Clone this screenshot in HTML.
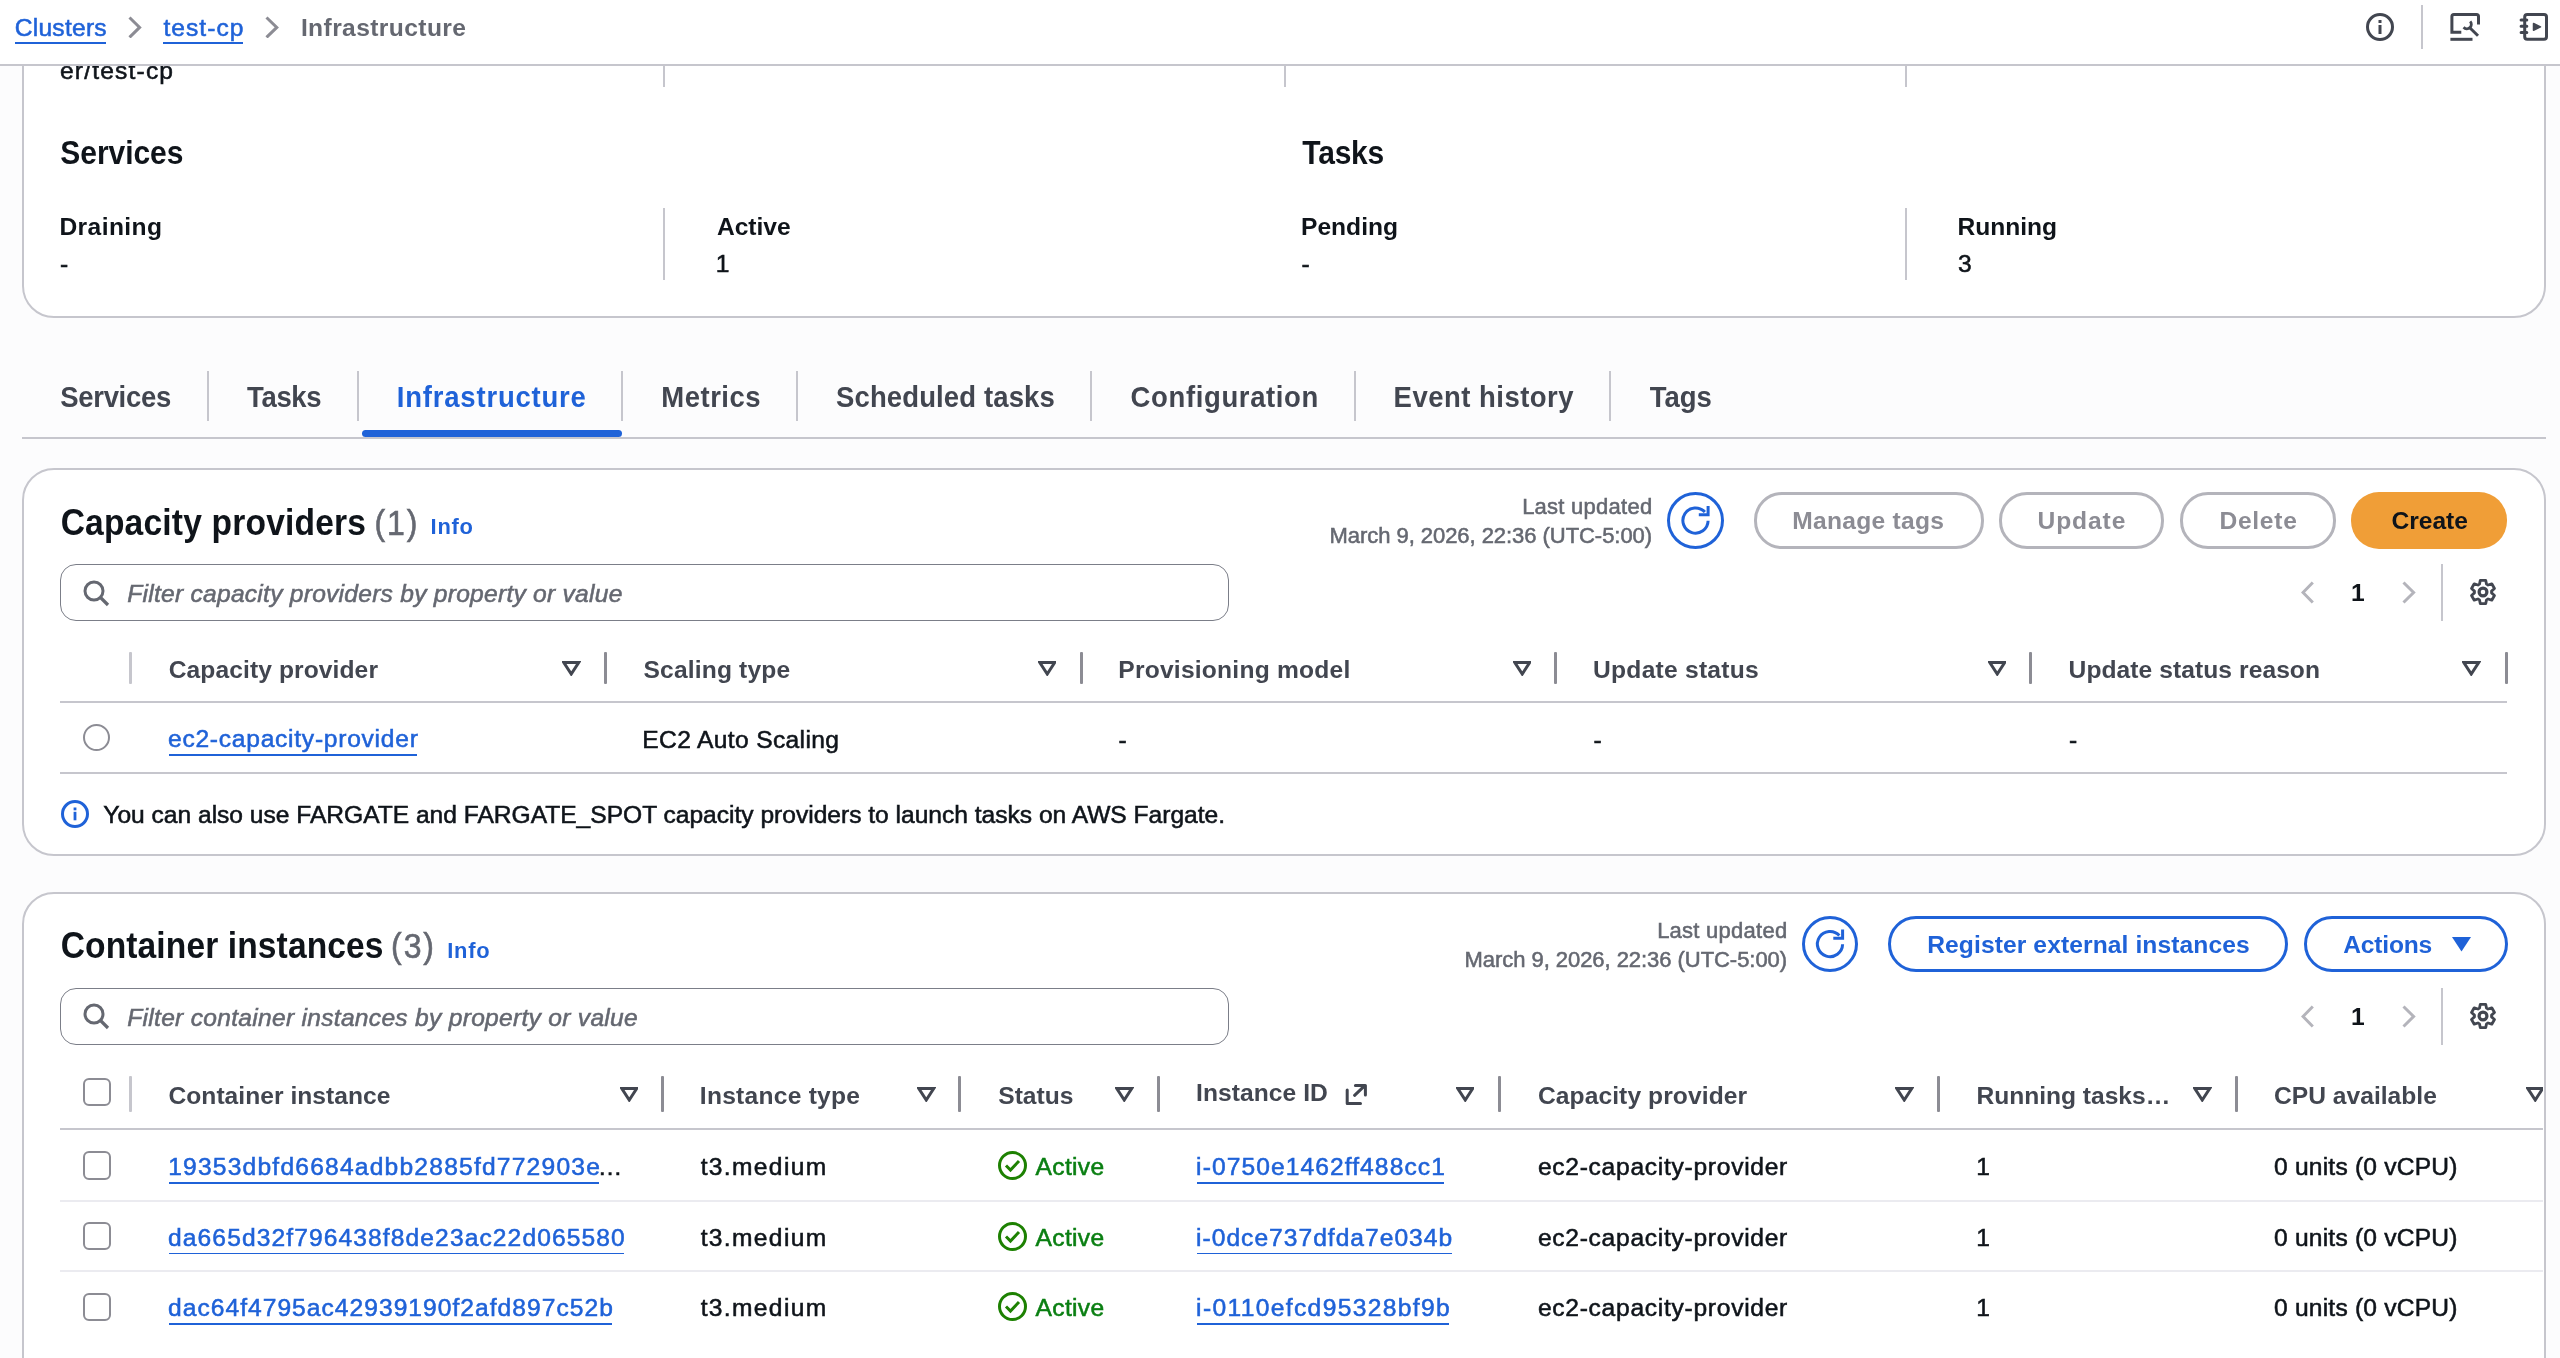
<!DOCTYPE html>
<html><head><meta charset="utf-8"><style>
html,body{margin:0;padding:0}
body{width:2560px;height:1358px;overflow:hidden;position:relative;background:#fcfcfd;font-family:"Liberation Sans",sans-serif}
.t{position:absolute;white-space:nowrap;line-height:1}
.r{position:absolute}
</style></head><body><div style="position:absolute;left:0;top:0;width:2560px;height:1358px;overflow:hidden;will-change:transform">
<div class="r" style="left:22.00px;top:-100.00px;width:2524.00px;height:418.00px;border:2px solid #c6c6cd;border-radius:32px;background:#ffffff;box-sizing:border-box;"></div>
<div class="r" style="left:22.00px;top:468.00px;width:2524.00px;height:388.00px;border:2px solid #c6c6cd;border-radius:32px;background:#ffffff;box-sizing:border-box;"></div>
<div class="r" style="left:22.00px;top:892.00px;width:2524.00px;height:518.00px;border:2px solid #c6c6cd;border-radius:32px;background:#ffffff;box-sizing:border-box;"></div>
<div class="t" style="left:60.02px;top:58.68px;font-size:24.6px;font-weight:normal;font-style:normal;color:#0f141a;letter-spacing:1.168px;-webkit-text-stroke:0.55px #0f141a;">er/test-cp</div>
<div class="r" style="left:663.00px;top:40.00px;width:2.00px;height:47.00px;background:#c6c6cd;"></div>
<div class="r" style="left:1284.00px;top:40.00px;width:2.00px;height:47.00px;background:#c6c6cd;"></div>
<div class="r" style="left:1905.00px;top:40.00px;width:2.00px;height:47.00px;background:#c6c6cd;"></div>
<div class="t" style="left:60.30px;top:139.41px;font-size:30px;font-weight:bold;font-style:normal;color:#0f141a;letter-spacing:-0.050px;transform-origin:0 25.39px;transform:scaleY(1.1);">Services</div>
<div class="t" style="left:1302.30px;top:139.41px;font-size:30px;font-weight:bold;font-style:normal;color:#0f141a;letter-spacing:-0.225px;transform-origin:0 25.39px;transform:scaleY(1.1);">Tasks</div>
<div class="t" style="left:59.40px;top:214.88px;font-size:24.6px;font-weight:bold;font-style:normal;color:#0f141a;letter-spacing:0.421px;">Draining</div>
<div class="t" style="left:59.89px;top:252.38px;font-size:24.6px;font-weight:normal;font-style:normal;color:#0f141a;letter-spacing:0.000px;-webkit-text-stroke:0.55px #0f141a;">-</div>
<div class="r" style="left:663.00px;top:208.00px;width:2.00px;height:72.00px;background:#c6c6cd;"></div>
<div class="t" style="left:716.88px;top:214.88px;font-size:24.6px;font-weight:bold;font-style:normal;color:#0f141a;letter-spacing:0.000px;">Active</div>
<div class="t" style="left:715.65px;top:252.38px;font-size:24.6px;font-weight:normal;font-style:normal;color:#0f141a;letter-spacing:0.000px;-webkit-text-stroke:0.55px #0f141a;">1</div>
<div class="t" style="left:1301.00px;top:214.88px;font-size:24.6px;font-weight:bold;font-style:normal;color:#0f141a;letter-spacing:0.000px;">Pending</div>
<div class="t" style="left:1301.49px;top:252.38px;font-size:24.6px;font-weight:normal;font-style:normal;color:#0f141a;letter-spacing:0.000px;-webkit-text-stroke:0.55px #0f141a;">-</div>
<div class="r" style="left:1905.00px;top:208.00px;width:2.00px;height:72.00px;background:#c6c6cd;"></div>
<div class="t" style="left:1957.40px;top:214.88px;font-size:24.6px;font-weight:bold;font-style:normal;color:#0f141a;letter-spacing:0.000px;">Running</div>
<div class="t" style="left:1958.02px;top:252.38px;font-size:24.6px;font-weight:normal;font-style:normal;color:#0f141a;letter-spacing:0.000px;-webkit-text-stroke:0.55px #0f141a;">3</div>
<div class="r" style="left:22.00px;top:437.00px;width:2524.00px;height:2.00px;background:#c6c6cd;"></div>
<div class="t" style="left:60.27px;top:384.42px;font-size:27.5px;font-weight:bold;font-style:normal;color:#424650;letter-spacing:-0.320px;transform-origin:0 23.28px;transform:scaleY(1.07);">Services</div>
<div class="t" style="left:247.12px;top:384.42px;font-size:27.5px;font-weight:bold;font-style:normal;color:#424650;letter-spacing:-0.381px;transform-origin:0 23.28px;transform:scaleY(1.07);">Tasks</div>
<div class="t" style="left:396.81px;top:384.42px;font-size:27.5px;font-weight:bold;font-style:normal;color:#1f62d8;letter-spacing:0.792px;transform-origin:0 23.28px;transform:scaleY(1.07);">Infrastructure</div>
<div class="t" style="left:661.21px;top:384.42px;font-size:27.5px;font-weight:bold;font-style:normal;color:#424650;letter-spacing:0.523px;transform-origin:0 23.28px;transform:scaleY(1.07);">Metrics</div>
<div class="t" style="left:836.07px;top:384.42px;font-size:27.5px;font-weight:bold;font-style:normal;color:#424650;letter-spacing:0.118px;transform-origin:0 23.28px;transform:scaleY(1.07);">Scheduled tasks</div>
<div class="t" style="left:1130.60px;top:384.42px;font-size:27.5px;font-weight:bold;font-style:normal;color:#424650;letter-spacing:0.624px;transform-origin:0 23.28px;transform:scaleY(1.07);">Configuration</div>
<div class="t" style="left:1393.61px;top:384.42px;font-size:27.5px;font-weight:bold;font-style:normal;color:#424650;letter-spacing:0.476px;transform-origin:0 23.28px;transform:scaleY(1.07);">Event history</div>
<div class="t" style="left:1649.72px;top:384.42px;font-size:27.5px;font-weight:bold;font-style:normal;color:#424650;letter-spacing:-0.058px;transform-origin:0 23.28px;transform:scaleY(1.07);">Tags</div>
<div class="r" style="left:207.00px;top:371.00px;width:2.00px;height:49.50px;background:#c6c6cd;"></div>
<div class="r" style="left:357.30px;top:371.00px;width:2.00px;height:49.50px;background:#c6c6cd;"></div>
<div class="r" style="left:621.40px;top:371.00px;width:2.00px;height:49.50px;background:#c6c6cd;"></div>
<div class="r" style="left:796.00px;top:371.00px;width:2.00px;height:49.50px;background:#c6c6cd;"></div>
<div class="r" style="left:1089.70px;top:371.00px;width:2.00px;height:49.50px;background:#c6c6cd;"></div>
<div class="r" style="left:1354.00px;top:371.00px;width:2.00px;height:49.50px;background:#c6c6cd;"></div>
<div class="r" style="left:1609.30px;top:371.00px;width:2.00px;height:49.50px;background:#c6c6cd;"></div>
<div class="r" style="left:361.80px;top:430.30px;width:259.90px;height:6.60px;background:#1f62d8;border-radius:4px"></div>
<div class="r" style="left:0.00px;top:0.00px;width:2560.00px;height:64.00px;background:#ffffff;z-index:5"></div>
<div class="r" style="left:0.00px;top:64.00px;width:2560.00px;height:2.00px;background:#c6c6cd;z-index:5"></div>
<div class="t" style="left:14.67px;top:15.98px;font-size:24.6px;font-weight:normal;font-style:normal;color:#1f62d8;letter-spacing:0.258px;z-index:6;-webkit-text-stroke:0.55px #1f62d8;">Clusters</div>
<div class="r" style="left:15.00px;top:42.30px;width:91.00px;height:1.70px;background:#1f62d8;z-index:6"></div>
<div class="t" style="left:163.38px;top:15.98px;font-size:24.6px;font-weight:normal;font-style:normal;color:#1f62d8;letter-spacing:1.050px;z-index:6;-webkit-text-stroke:0.55px #1f62d8;">test-cp</div>
<div class="r" style="left:163.00px;top:42.30px;width:80.00px;height:1.70px;background:#1f62d8;z-index:6"></div>
<div class="t" style="left:300.90px;top:15.58px;font-size:24.6px;font-weight:bold;font-style:normal;color:#656871;letter-spacing:0.397px;z-index:6;">Infrastructure</div>
<svg class="r" style="left:128.4px;top:15.5px;z-index:6" width="13.6" height="22.9"><path d="M1.5 1.5 L11.6 11.4 L1.5 21.4" fill="none" stroke="#8c8c94" stroke-width="3" stroke-linecap="butt" stroke-linejoin="miter"/></svg>
<svg class="r" style="left:265px;top:15.5px;z-index:6" width="13.8" height="22.9"><path d="M1.5 1.5 L11.8 11.4 L1.5 21.4" fill="none" stroke="#8c8c94" stroke-width="3" stroke-linecap="butt" stroke-linejoin="miter"/></svg>
<svg class="r" style="left:2366px;top:13px;z-index:6" width="28" height="28" viewBox="0 0 28 28"><circle cx="14" cy="14" r="12.5" fill="none" stroke="#424650" stroke-width="3"/><rect x="12.5" y="7" width="3" height="3" fill="#424650"/><rect x="12.5" y="12" width="3" height="9" fill="#424650"/></svg>
<div class="r" style="left:2421.00px;top:5.00px;width:2.00px;height:44.00px;background:#c6c6cd;z-index:6"></div>
<svg class="r" style="left:2450px;top:12px;z-index:6" width="32" height="32" viewBox="0 0 32 32"><path d="M11.3 20.3 H1.9 V4.5 Q1.9 2.5 3.9 2.5 H26.5 Q28.5 2.5 28.5 4.5 V12.6" fill="none" stroke="#424650" stroke-width="3"/><path d="M0.4 27.3 H22.5" stroke="#424650" stroke-width="3"/><path d="M13.6 15.3 A4.4 4.4 0 1 0 20.2 9.4" fill="none" stroke="#424650" stroke-width="2.8"/><path d="M19.8 15.8 L28 23.8" stroke="#424650" stroke-width="3"/></svg>
<svg class="r" style="left:2518px;top:12px;z-index:6" width="32" height="32" viewBox="0 0 32 32"><rect x="6.7" y="2.4" width="21.8" height="24.9" rx="2.5" fill="none" stroke="#424650" stroke-width="3"/><path d="M3.1 8 H8.8 M3.1 14.3 H8.8 M3.1 20.5 H8.8" stroke="#424650" stroke-width="3" stroke-linecap="round"/><path d="M15.5 11.5 L15.5 18.3 L22.5 14.9 Z" fill="#424650" stroke="#424650" stroke-width="1.5" stroke-linejoin="round"/></svg>
<div class="t" style="left:60.66px;top:506.56px;font-size:33.6px;font-weight:bold;font-style:normal;color:#0f141a;letter-spacing:0.176px;transform-origin:0 28.44px;transform:scaleY(1.1);">Capacity providers</div>
<div class="t" style="left:374.48px;top:507.91px;font-size:32px;font-weight:normal;font-style:normal;color:#656871;letter-spacing:1.900px;transform-origin:0 27.09px;transform:scaleY(1.1);-webkit-text-stroke:0.55px #656871;">(1)</div>
<div class="t" style="left:430.58px;top:516.06px;font-size:21.9px;font-weight:bold;font-style:normal;color:#1f62d8;letter-spacing:0.741px;">Info</div>
<div class="t" style="left:1522.14px;top:495.78px;font-size:22px;font-weight:normal;font-style:normal;color:#656871;letter-spacing:0.257px;-webkit-text-stroke:0.55px #656871;">Last updated</div>
<div class="t" style="left:1329.54px;top:524.98px;font-size:22px;font-weight:normal;font-style:normal;color:#656871;letter-spacing:-0.049px;-webkit-text-stroke:0.55px #656871;">March 9, 2026, 22:36 (UTC-5:00)</div>
<svg class="r" style="left:1666.9px;top:491.9px" width="57" height="57" viewBox="0 0 57 57"><circle cx="28.5" cy="28.5" r="27.0" fill="#fff" stroke="#1f62d8" stroke-width="3"/><path d="M41.10 28.80 A12.6 12.6 0 1 1 37.86 20.07" fill="none" stroke="#1f62d8" stroke-width="3"/><path d="M41.10 13.90 V22.80 H31.80" fill="none" stroke="#1f62d8" stroke-width="3"/></svg>
<div class="r" style="left:1753.50px;top:492.20px;width:230.00px;height:56.40px;border:3px solid #b4b4bb;border-radius:28px;background:#fff;box-sizing:border-box;"></div>
<div class="t" style="left:1792.30px;top:508.88px;font-size:24.6px;font-weight:bold;font-style:normal;color:#8c8c94;letter-spacing:0.263px;">Manage tags</div>
<div class="r" style="left:1998.80px;top:492.20px;width:165.60px;height:56.40px;border:3px solid #b4b4bb;border-radius:28px;background:#fff;box-sizing:border-box;"></div>
<div class="t" style="left:2037.52px;top:508.88px;font-size:24.6px;font-weight:bold;font-style:normal;color:#8c8c94;letter-spacing:0.889px;">Update</div>
<div class="r" style="left:2180.40px;top:492.20px;width:155.40px;height:56.40px;border:3px solid #b4b4bb;border-radius:28px;background:#fff;box-sizing:border-box;"></div>
<div class="t" style="left:2219.40px;top:508.88px;font-size:24.6px;font-weight:bold;font-style:normal;color:#8c8c94;letter-spacing:0.732px;">Delete</div>
<div class="r" style="left:2351.00px;top:492.20px;width:156.40px;height:56.40px;border:0px solid #f09e37;border-radius:28px;background:#f09e37;box-sizing:border-box;"></div>
<div class="t" style="left:2391.42px;top:508.88px;font-size:24.6px;font-weight:bold;font-style:normal;color:#0f141a;letter-spacing:-0.012px;">Create</div>
<div class="r" style="left:60.00px;top:564.00px;width:1169.00px;height:57.00px;border:1.7px solid #7b7e88;border-radius:16px;background:#fff;box-sizing:border-box;"></div>
<svg class="r" style="left:78.1px;top:574.5px" width="32" height="36" viewBox="0 0 32 36"><circle cx="16" cy="16" r="9" fill="none" stroke="#656871" stroke-width="3"/><path d="M22.5 22.5 L30 30" stroke="#656871" stroke-width="3.2"/></svg>
<div class="t" style="left:127.26px;top:581.88px;font-size:24.6px;font-weight:normal;font-style:italic;color:#656871;letter-spacing:0.249px;-webkit-text-stroke:0.55px #656871;">Filter capacity providers by property or value</div>
<svg class="r" style="left:2300.6px;top:580.9px;z-index:1" width="13.3" height="23.0"><path d="M11.8 1.5 L2.0 11.5 L11.8 21.5" fill="none" stroke="#b4b4bb" stroke-width="3" stroke-linecap="butt" stroke-linejoin="miter"/></svg>
<div class="t" style="left:2351.12px;top:581.18px;font-size:24.6px;font-weight:bold;font-style:normal;color:#0f141a;letter-spacing:0.000px;">1</div>
<svg class="r" style="left:2402.3px;top:580.9px;z-index:1" width="13.6" height="23.0"><path d="M1.5 1.5 L11.6 11.5 L1.5 21.5" fill="none" stroke="#b4b4bb" stroke-width="3" stroke-linecap="butt" stroke-linejoin="miter"/></svg>
<div class="r" style="left:2441.00px;top:564.30px;width:2.00px;height:56.60px;background:#c6c6cd;"></div>
<svg class="r" style="left:2467.0px;top:576.3px" width="32" height="32" viewBox="0 0 32 32"><path d="M12.50 8.14 L13.30 4.31 L18.70 4.31 L19.50 8.14 L21.05 9.04 L24.78 7.82 L27.48 12.49 L24.55 15.10 L24.55 16.90 L27.48 19.51 L24.78 24.18 L21.05 22.96 L19.50 23.86 L18.70 27.69 L13.30 27.69 L12.50 23.86 L10.95 22.96 L7.22 24.18 L4.52 19.51 L7.45 16.90 L7.45 15.10 L4.52 12.49 L7.22 7.82 L10.95 9.04 Z" fill="none" stroke="#424650" stroke-width="2.8" stroke-linejoin="round"/><circle cx="16" cy="16" r="3.9" fill="none" stroke="#424650" stroke-width="3.2"/></svg>
<div class="r" style="left:128.80px;top:652.30px;width:3.00px;height:32.10px;background:#c6c6cd;border-radius:1px"></div>
<div class="r" style="left:604.00px;top:652.30px;width:3.00px;height:32.10px;background:#8c8c94;border-radius:1px"></div>
<div class="r" style="left:1079.80px;top:652.30px;width:3.00px;height:32.10px;background:#8c8c94;border-radius:1px"></div>
<div class="r" style="left:1553.80px;top:652.30px;width:3.00px;height:32.10px;background:#8c8c94;border-radius:1px"></div>
<div class="r" style="left:2028.80px;top:652.30px;width:3.00px;height:32.10px;background:#8c8c94;border-radius:1px"></div>
<div class="r" style="left:2504.50px;top:652.30px;width:3.00px;height:32.10px;background:#8c8c94;border-radius:1px"></div>
<div class="t" style="left:168.72px;top:657.98px;font-size:24.6px;font-weight:bold;font-style:normal;color:#424650;letter-spacing:0.093px;">Capacity provider</div>
<div class="t" style="left:643.56px;top:657.98px;font-size:24.6px;font-weight:bold;font-style:normal;color:#424650;letter-spacing:0.155px;">Scaling type</div>
<div class="t" style="left:1118.30px;top:657.98px;font-size:24.6px;font-weight:bold;font-style:normal;color:#424650;letter-spacing:0.220px;">Provisioning model</div>
<div class="t" style="left:1593.12px;top:657.98px;font-size:24.6px;font-weight:bold;font-style:normal;color:#424650;letter-spacing:0.238px;">Update status</div>
<div class="t" style="left:2068.62px;top:657.98px;font-size:24.6px;font-weight:bold;font-style:normal;color:#424650;letter-spacing:0.067px;">Update status reason</div>
<svg class="r" style="left:562.2px;top:661.4px" width="18.5" height="14.5" viewBox="0 0 18.5 14.5"><path d="M1.8 1.5 H16.7 L9.25 13 Z" fill="none" stroke="#424650" stroke-width="3" stroke-linejoin="miter"/></svg>
<svg class="r" style="left:1037.5px;top:661.4px" width="18.5" height="14.5" viewBox="0 0 18.5 14.5"><path d="M1.8 1.5 H16.7 L9.25 13 Z" fill="none" stroke="#424650" stroke-width="3" stroke-linejoin="miter"/></svg>
<svg class="r" style="left:1512.5px;top:661.4px" width="18.5" height="14.5" viewBox="0 0 18.5 14.5"><path d="M1.8 1.5 H16.7 L9.25 13 Z" fill="none" stroke="#424650" stroke-width="3" stroke-linejoin="miter"/></svg>
<svg class="r" style="left:1987.7px;top:661.4px" width="18.5" height="14.5" viewBox="0 0 18.5 14.5"><path d="M1.8 1.5 H16.7 L9.25 13 Z" fill="none" stroke="#424650" stroke-width="3" stroke-linejoin="miter"/></svg>
<svg class="r" style="left:2462.2px;top:661.4px" width="18.5" height="14.5" viewBox="0 0 18.5 14.5"><path d="M1.8 1.5 H16.7 L9.25 13 Z" fill="none" stroke="#424650" stroke-width="3" stroke-linejoin="miter"/></svg>
<div class="r" style="left:60.00px;top:701.00px;width:2447.00px;height:2.00px;background:#c6c6cd;"></div>
<div class="r" style="left:83.3px;top:724.3px;width:27px;height:27px;border:2px solid #8c8c94;border-radius:50%;box-sizing:border-box;background:#fff"></div>
<div class="t" style="left:168.02px;top:727.18px;font-size:24.6px;font-weight:normal;font-style:normal;color:#1f62d8;letter-spacing:0.735px;-webkit-text-stroke:0.55px #1f62d8;">ec2-capacity-provider</div>
<div class="r" style="left:169.00px;top:754.00px;width:248.40px;height:1.70px;background:#1f62d8;"></div>
<div class="t" style="left:642.33px;top:727.58px;font-size:24.6px;font-weight:normal;font-style:normal;color:#0f141a;letter-spacing:0.345px;-webkit-text-stroke:0.55px #0f141a;">EC2 Auto Scaling</div>
<div class="t" style="left:1118.39px;top:727.58px;font-size:24.6px;font-weight:normal;font-style:normal;color:#0f141a;letter-spacing:0.000px;-webkit-text-stroke:0.55px #0f141a;">-</div>
<div class="t" style="left:1593.49px;top:727.58px;font-size:24.6px;font-weight:normal;font-style:normal;color:#0f141a;letter-spacing:0.000px;-webkit-text-stroke:0.55px #0f141a;">-</div>
<div class="t" style="left:2068.89px;top:727.58px;font-size:24.6px;font-weight:normal;font-style:normal;color:#0f141a;letter-spacing:0.000px;-webkit-text-stroke:0.55px #0f141a;">-</div>
<div class="r" style="left:60.00px;top:772.40px;width:2447.00px;height:2.00px;background:#c6c6cd;"></div>
<svg class="r" style="left:60.5px;top:800.4px" width="28" height="28" viewBox="0 0 28 28"><circle cx="14" cy="14" r="12.5" fill="none" stroke="#1f62d8" stroke-width="3"/><rect x="12.6" y="7.5" width="2.8" height="2.8" fill="#1f62d8"/><rect x="12.6" y="11.8" width="2.8" height="8.5" fill="#1f62d8"/></svg>
<div class="t" style="left:103.29px;top:802.98px;font-size:24.6px;font-weight:normal;font-style:normal;color:#0f141a;letter-spacing:-0.016px;-webkit-text-stroke:0.55px #0f141a;">You can also use FARGATE and FARGATE_SPOT capacity providers to launch tasks on AWS Fargate.</div>
<div class="t" style="left:60.66px;top:930.06px;font-size:33.6px;font-weight:bold;font-style:normal;color:#0f141a;letter-spacing:0.108px;transform-origin:0 28.44px;transform:scaleY(1.1);">Container instances</div>
<div class="t" style="left:391.08px;top:931.41px;font-size:32px;font-weight:normal;font-style:normal;color:#656871;letter-spacing:1.900px;transform-origin:0 27.09px;transform:scaleY(1.1);-webkit-text-stroke:0.55px #656871;">(3)</div>
<div class="t" style="left:447.28px;top:939.56px;font-size:21.9px;font-weight:bold;font-style:normal;color:#1f62d8;letter-spacing:0.741px;">Info</div>
<div class="t" style="left:1657.14px;top:920.08px;font-size:22px;font-weight:normal;font-style:normal;color:#656871;letter-spacing:0.257px;-webkit-text-stroke:0.55px #656871;">Last updated</div>
<div class="t" style="left:1464.54px;top:949.08px;font-size:22px;font-weight:normal;font-style:normal;color:#656871;letter-spacing:-0.049px;-webkit-text-stroke:0.55px #656871;">March 9, 2026, 22:36 (UTC-5:00)</div>
<svg class="r" style="left:1801.7px;top:916.0px" width="56" height="56" viewBox="0 0 56 56"><circle cx="28.0" cy="28.0" r="26.5" fill="#fff" stroke="#1f62d8" stroke-width="3"/><path d="M40.60 28.30 A12.6 12.6 0 1 1 37.36 19.57" fill="none" stroke="#1f62d8" stroke-width="3"/><path d="M40.60 13.40 V22.30 H31.30" fill="none" stroke="#1f62d8" stroke-width="3"/></svg>
<div class="r" style="left:1888.30px;top:916.30px;width:399.50px;height:56.10px;border:3px solid #1f62d8;border-radius:28px;background:#fff;box-sizing:border-box;"></div>
<div class="t" style="left:1927.20px;top:932.98px;font-size:24.6px;font-weight:bold;font-style:normal;color:#1f62d8;letter-spacing:0.102px;">Register external instances</div>
<div class="r" style="left:2304.00px;top:916.30px;width:203.50px;height:56.10px;border:3px solid #1f62d8;border-radius:28px;background:#fff;box-sizing:border-box;"></div>
<div class="t" style="left:2343.29px;top:932.98px;font-size:24.6px;font-weight:bold;font-style:normal;color:#1f62d8;letter-spacing:-0.210px;">Actions</div>
<svg class="r" style="left:2451.5px;top:936.8px" width="19" height="15" viewBox="0 0 19 15"><path d="M0 0 H19 L9.5 14.6 Z" fill="#1f62d8"/></svg>
<div class="r" style="left:60.00px;top:988.00px;width:1169.00px;height:57.00px;border:1.7px solid #7b7e88;border-radius:16px;background:#fff;box-sizing:border-box;"></div>
<svg class="r" style="left:78.1px;top:998.4px" width="32" height="36" viewBox="0 0 32 36"><circle cx="16" cy="16" r="9" fill="none" stroke="#656871" stroke-width="3"/><path d="M22.5 22.5 L30 30" stroke="#656871" stroke-width="3.2"/></svg>
<div class="t" style="left:127.26px;top:1005.78px;font-size:24.6px;font-weight:normal;font-style:italic;color:#656871;letter-spacing:0.281px;-webkit-text-stroke:0.55px #656871;">Filter container instances by property or value</div>
<svg class="r" style="left:2300.6px;top:1004.8px;z-index:1" width="13.3" height="23.0"><path d="M11.8 1.5 L2.0 11.5 L11.8 21.5" fill="none" stroke="#b4b4bb" stroke-width="3" stroke-linecap="butt" stroke-linejoin="miter"/></svg>
<div class="t" style="left:2351.12px;top:1005.08px;font-size:24.6px;font-weight:bold;font-style:normal;color:#0f141a;letter-spacing:0.000px;">1</div>
<svg class="r" style="left:2402.3px;top:1004.8px;z-index:1" width="13.6" height="23.0"><path d="M1.5 1.5 L11.6 11.5 L1.5 21.5" fill="none" stroke="#b4b4bb" stroke-width="3" stroke-linecap="butt" stroke-linejoin="miter"/></svg>
<div class="r" style="left:2441.00px;top:988.20px;width:2.00px;height:56.60px;background:#c6c6cd;"></div>
<svg class="r" style="left:2467.0px;top:1000.2px" width="32" height="32" viewBox="0 0 32 32"><path d="M12.50 8.14 L13.30 4.31 L18.70 4.31 L19.50 8.14 L21.05 9.04 L24.78 7.82 L27.48 12.49 L24.55 15.10 L24.55 16.90 L27.48 19.51 L24.78 24.18 L21.05 22.96 L19.50 23.86 L18.70 27.69 L13.30 27.69 L12.50 23.86 L10.95 22.96 L7.22 24.18 L4.52 19.51 L7.45 16.90 L7.45 15.10 L4.52 12.49 L7.22 7.82 L10.95 9.04 Z" fill="none" stroke="#424650" stroke-width="2.8" stroke-linejoin="round"/><circle cx="16" cy="16" r="3.9" fill="none" stroke="#424650" stroke-width="3.2"/></svg>
<div class="r" style="left:83px;top:1078px;width:28.3px;height:28.3px;border:2px solid #8c8c94;border-radius:6px;box-sizing:border-box;background:#fff"></div>
<div class="r" style="left:129.00px;top:1076.00px;width:3.00px;height:35.75px;background:#c6c6cd;border-radius:1px"></div>
<div class="r" style="left:661.00px;top:1076.00px;width:3.00px;height:35.75px;background:#8c8c94;border-radius:1px"></div>
<div class="r" style="left:958.40px;top:1076.00px;width:3.00px;height:35.75px;background:#8c8c94;border-radius:1px"></div>
<div class="r" style="left:1156.90px;top:1076.00px;width:3.00px;height:35.75px;background:#8c8c94;border-radius:1px"></div>
<div class="r" style="left:1497.80px;top:1076.00px;width:3.00px;height:35.75px;background:#8c8c94;border-radius:1px"></div>
<div class="r" style="left:1937.20px;top:1076.00px;width:3.00px;height:35.75px;background:#8c8c94;border-radius:1px"></div>
<div class="r" style="left:2234.75px;top:1076.00px;width:3.00px;height:35.75px;background:#8c8c94;border-radius:1px"></div>
<div class="t" style="left:168.52px;top:1083.73px;font-size:24.6px;font-weight:bold;font-style:normal;color:#424650;letter-spacing:0.026px;">Container instance</div>
<div class="t" style="left:699.80px;top:1083.73px;font-size:24.6px;font-weight:bold;font-style:normal;color:#424650;letter-spacing:0.247px;">Instance type</div>
<div class="t" style="left:998.26px;top:1083.73px;font-size:24.6px;font-weight:bold;font-style:normal;color:#424650;letter-spacing:-0.006px;">Status</div>
<div class="t" style="left:1196.10px;top:1081.48px;font-size:24.6px;font-weight:bold;font-style:normal;color:#424650;letter-spacing:0.054px;">Instance ID</div>
<div class="t" style="left:1537.92px;top:1083.73px;font-size:24.6px;font-weight:bold;font-style:normal;color:#424650;letter-spacing:0.093px;">Capacity provider</div>
<div class="t" style="left:1976.40px;top:1083.73px;font-size:24.6px;font-weight:bold;font-style:normal;color:#424650;letter-spacing:-0.013px;">Running tasks…</div>
<div class="t" style="left:2274.02px;top:1083.73px;font-size:24.6px;font-weight:bold;font-style:normal;color:#424650;letter-spacing:0.010px;">CPU available</div>
<svg class="r" style="left:619.5px;top:1087.1px" width="18.5" height="14.5" viewBox="0 0 18.5 14.5"><path d="M1.8 1.5 H16.7 L9.25 13 Z" fill="none" stroke="#424650" stroke-width="3" stroke-linejoin="miter"/></svg>
<svg class="r" style="left:917.2px;top:1087.1px" width="18.5" height="14.5" viewBox="0 0 18.5 14.5"><path d="M1.8 1.5 H16.7 L9.25 13 Z" fill="none" stroke="#424650" stroke-width="3" stroke-linejoin="miter"/></svg>
<svg class="r" style="left:1115.3px;top:1087.1px" width="18.5" height="14.5" viewBox="0 0 18.5 14.5"><path d="M1.8 1.5 H16.7 L9.25 13 Z" fill="none" stroke="#424650" stroke-width="3" stroke-linejoin="miter"/></svg>
<svg class="r" style="left:1455.7px;top:1087.1px" width="18.5" height="14.5" viewBox="0 0 18.5 14.5"><path d="M1.8 1.5 H16.7 L9.25 13 Z" fill="none" stroke="#424650" stroke-width="3" stroke-linejoin="miter"/></svg>
<svg class="r" style="left:1895.4px;top:1087.1px" width="18.5" height="14.5" viewBox="0 0 18.5 14.5"><path d="M1.8 1.5 H16.7 L9.25 13 Z" fill="none" stroke="#424650" stroke-width="3" stroke-linejoin="miter"/></svg>
<svg class="r" style="left:2193.2px;top:1087.1px" width="18.5" height="14.5" viewBox="0 0 18.5 14.5"><path d="M1.8 1.5 H16.7 L9.25 13 Z" fill="none" stroke="#424650" stroke-width="3" stroke-linejoin="miter"/></svg>
<div class="r" style="left:2526.25px;top:1087.1px;width:16.5px;height:15px;overflow:hidden"><svg width="18.5" height="14.5" viewBox="0 0 18.5 14.5"><path d="M1.8 1.5 H16.7 L9.25 13 Z" fill="none" stroke="#424650" stroke-width="3"/></svg></div>
<svg class="r" style="left:1345px;top:1083.5px" width="24" height="24" viewBox="0 0 24 24"><path d="M2.2 6 V19.6 H15.5" fill="none" stroke="#424650" stroke-width="3" stroke-linecap="round" stroke-linejoin="round"/><path d="M10.4 1.55 H20.4 V11.1 M9.6 11.3 L19.5 1.9" fill="none" stroke="#424650" stroke-width="3" stroke-linecap="round" stroke-linejoin="round"/></svg>
<div class="r" style="left:60.00px;top:1127.75px;width:2483.00px;height:2.00px;background:#c6c6cd;"></div>
<div class="r" style="left:83px;top:1151.25px;width:28.3px;height:28.3px;border:2px solid #8c8c94;border-radius:6px;box-sizing:border-box;background:#fff"></div>
<div class="t" style="left:168.16px;top:1155.48px;font-size:24.6px;font-weight:normal;font-style:normal;color:#1f62d8;letter-spacing:1.208px;-webkit-text-stroke:0.55px #1f62d8;">19353dbfd6684adbb2885fd772903e</div>
<div class="r" style="left:169.00px;top:1182.00px;width:429.75px;height:1.70px;background:#1f62d8;"></div>
<div class="t" style="left:597.68px;top:1155.48px;font-size:24.6px;font-weight:normal;font-style:normal;color:#0f141a;letter-spacing:0.000px;-webkit-text-stroke:0.55px #0f141a;">…</div>
<div class="t" style="left:700.63px;top:1155.48px;font-size:24.6px;font-weight:normal;font-style:normal;color:#0f141a;letter-spacing:1.348px;-webkit-text-stroke:0.55px #0f141a;">t3.medium</div>
<svg class="r" style="left:997.7px;top:1151.4px" width="29" height="29" viewBox="0 0 29 29"><circle cx="14.5" cy="14.5" r="13" fill="none" stroke="#1d8102" stroke-width="3"/><path d="M8 14.5 L12.5 19 L21 10" fill="none" stroke="#1d8102" stroke-width="3"/></svg>
<div class="t" style="left:1035.60px;top:1155.48px;font-size:24.6px;font-weight:normal;font-style:normal;color:#0a7f12;letter-spacing:0.299px;-webkit-text-stroke:0.55px #0a7f12;">Active</div>
<div class="t" style="left:1196.10px;top:1155.48px;font-size:24.6px;font-weight:normal;font-style:normal;color:#1f62d8;letter-spacing:1.080px;-webkit-text-stroke:0.55px #1f62d8;">i-0750e1462ff488cc1</div>
<div class="r" style="left:1197.00px;top:1182.00px;width:247.20px;height:1.70px;background:#1f62d8;"></div>
<div class="t" style="left:1537.92px;top:1155.48px;font-size:24.6px;font-weight:normal;font-style:normal;color:#0f141a;letter-spacing:0.715px;-webkit-text-stroke:0.55px #0f141a;">ec2-capacity-provider</div>
<div class="t" style="left:1976.15px;top:1155.48px;font-size:24.6px;font-weight:normal;font-style:normal;color:#0f141a;letter-spacing:0.000px;-webkit-text-stroke:0.55px #0f141a;">1</div>
<div class="t" style="left:2274.02px;top:1155.48px;font-size:24.6px;font-weight:normal;font-style:normal;color:#0f141a;letter-spacing:0.201px;-webkit-text-stroke:0.55px #0f141a;">0 units (0 vCPU)</div>
<div class="r" style="left:60.00px;top:1200.25px;width:2483.00px;height:2.00px;background:#ebebf0;"></div>
<div class="r" style="left:83px;top:1222.00px;width:28.3px;height:28.3px;border:2px solid #8c8c94;border-radius:6px;box-sizing:border-box;background:#fff"></div>
<div class="t" style="left:168.02px;top:1225.98px;font-size:24.6px;font-weight:normal;font-style:normal;color:#1f62d8;letter-spacing:1.100px;-webkit-text-stroke:0.55px #1f62d8;">da665d32f796438f8de23ac22d065580</div>
<div class="r" style="left:168.75px;top:1252.50px;width:455.50px;height:1.70px;background:#1f62d8;"></div>
<div class="t" style="left:700.63px;top:1225.98px;font-size:24.6px;font-weight:normal;font-style:normal;color:#0f141a;letter-spacing:1.348px;-webkit-text-stroke:0.55px #0f141a;">t3.medium</div>
<svg class="r" style="left:997.7px;top:1221.9px" width="29" height="29" viewBox="0 0 29 29"><circle cx="14.5" cy="14.5" r="13" fill="none" stroke="#1d8102" stroke-width="3"/><path d="M8 14.5 L12.5 19 L21 10" fill="none" stroke="#1d8102" stroke-width="3"/></svg>
<div class="t" style="left:1035.60px;top:1225.98px;font-size:24.6px;font-weight:normal;font-style:normal;color:#0a7f12;letter-spacing:0.299px;-webkit-text-stroke:0.55px #0a7f12;">Active</div>
<div class="t" style="left:1196.10px;top:1225.98px;font-size:24.6px;font-weight:normal;font-style:normal;color:#1f62d8;letter-spacing:1.004px;-webkit-text-stroke:0.55px #1f62d8;">i-0dce737dfda7e034b</div>
<div class="r" style="left:1197.00px;top:1252.50px;width:254.70px;height:1.70px;background:#1f62d8;"></div>
<div class="t" style="left:1537.92px;top:1225.98px;font-size:24.6px;font-weight:normal;font-style:normal;color:#0f141a;letter-spacing:0.715px;-webkit-text-stroke:0.55px #0f141a;">ec2-capacity-provider</div>
<div class="t" style="left:1976.15px;top:1225.98px;font-size:24.6px;font-weight:normal;font-style:normal;color:#0f141a;letter-spacing:0.000px;-webkit-text-stroke:0.55px #0f141a;">1</div>
<div class="t" style="left:2274.02px;top:1225.98px;font-size:24.6px;font-weight:normal;font-style:normal;color:#0f141a;letter-spacing:0.201px;-webkit-text-stroke:0.55px #0f141a;">0 units (0 vCPU)</div>
<div class="r" style="left:60.00px;top:1270.25px;width:2483.00px;height:2.00px;background:#ebebf0;"></div>
<div class="r" style="left:83px;top:1292.50px;width:28.3px;height:28.3px;border:2px solid #8c8c94;border-radius:6px;box-sizing:border-box;background:#fff"></div>
<div class="t" style="left:168.02px;top:1296.48px;font-size:24.6px;font-weight:normal;font-style:normal;color:#1f62d8;letter-spacing:1.026px;-webkit-text-stroke:0.55px #1f62d8;">dac64f4795ac42939190f2afd897c52b</div>
<div class="r" style="left:168.75px;top:1323.00px;width:443.50px;height:1.70px;background:#1f62d8;"></div>
<div class="t" style="left:700.63px;top:1296.48px;font-size:24.6px;font-weight:normal;font-style:normal;color:#0f141a;letter-spacing:1.348px;-webkit-text-stroke:0.55px #0f141a;">t3.medium</div>
<svg class="r" style="left:997.7px;top:1292.4px" width="29" height="29" viewBox="0 0 29 29"><circle cx="14.5" cy="14.5" r="13" fill="none" stroke="#1d8102" stroke-width="3"/><path d="M8 14.5 L12.5 19 L21 10" fill="none" stroke="#1d8102" stroke-width="3"/></svg>
<div class="t" style="left:1035.60px;top:1296.48px;font-size:24.6px;font-weight:normal;font-style:normal;color:#0a7f12;letter-spacing:0.299px;-webkit-text-stroke:0.55px #0a7f12;">Active</div>
<div class="t" style="left:1196.10px;top:1296.48px;font-size:24.6px;font-weight:normal;font-style:normal;color:#1f62d8;letter-spacing:1.351px;-webkit-text-stroke:0.55px #1f62d8;">i-0110efcd95328bf9b</div>
<div class="r" style="left:1197.00px;top:1323.00px;width:252.20px;height:1.70px;background:#1f62d8;"></div>
<div class="t" style="left:1537.92px;top:1296.48px;font-size:24.6px;font-weight:normal;font-style:normal;color:#0f141a;letter-spacing:0.715px;-webkit-text-stroke:0.55px #0f141a;">ec2-capacity-provider</div>
<div class="t" style="left:1976.15px;top:1296.48px;font-size:24.6px;font-weight:normal;font-style:normal;color:#0f141a;letter-spacing:0.000px;-webkit-text-stroke:0.55px #0f141a;">1</div>
<div class="t" style="left:2274.02px;top:1296.48px;font-size:24.6px;font-weight:normal;font-style:normal;color:#0f141a;letter-spacing:0.201px;-webkit-text-stroke:0.55px #0f141a;">0 units (0 vCPU)</div>
</div></body></html>
